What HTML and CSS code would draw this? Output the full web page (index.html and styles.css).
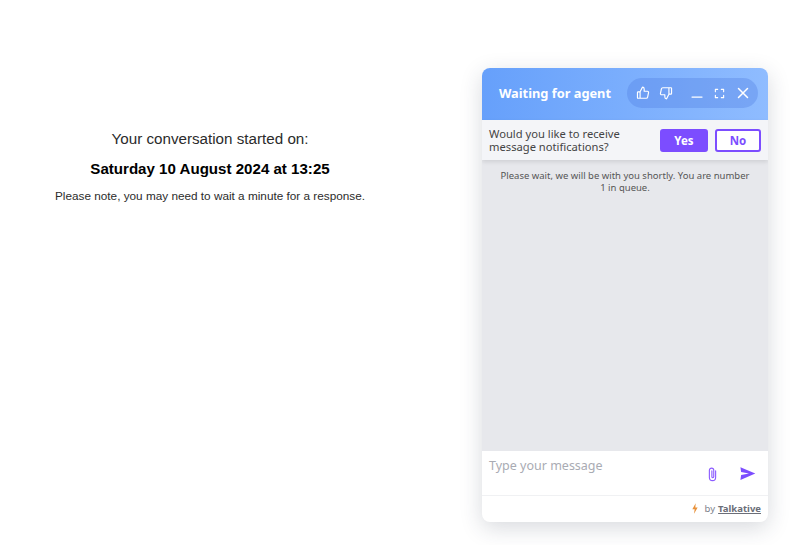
FILE: index.html
```html
<!DOCTYPE html>
<html lang="en">
<head>
<meta charset="utf-8">
<title>Chat</title>
<link rel="stylesheet" href="styles.css">
</head>
<body>
<main class="intro">
  <p class="started">Your conversation started on:</p>
  <p class="date">Saturday 10 August 2024 at 13:25</p>
  <p class="note">Please note, you may need to wait a minute for a response.</p>
</main>
<section class="widget">
  <header class="head">
    <h1 class="title">Waiting for agent</h1>
    <div class="tools">
      <svg class="ico" viewBox="0 0 24 24"><path d="M7 10v11H3.500a1 1 0 0 1-1-1v-9a1 1 0 0 1 1-1H7l4-8a3 3 0 0 1 3 3v4h5.500a2 2 0 0 1 2 2.400l-1.600 7.600a2.500 2.500 0 0 1-2.400 2H7"/></svg>
      <svg class="ico down" viewBox="0 0 24 24"><path d="M17 14V3h3.500a1 1 0 0 1 1 1v9a1 1 0 0 1-1 1H17l-4 8a3 3 0 0 1-3-3v-4H4.500a2 2 0 0 1-2-2.400l1.600-7.600a2.500 2.500 0 0 1 2.400-2H17"/></svg>
      <svg class="ico min" viewBox="0 0 24 24"><path d="M2 20h20"/></svg>
      <svg class="ico full" viewBox="0 0 24 24"><path d="M3 8V3h5M16 3h5v5M21 16v5h-5M8 21H3v-5"/></svg>
      <svg class="ico close" viewBox="0 0 24 24"><path d="M3 3l18 18M21 3L3 21"/></svg>
    </div>
  </header>
  <div class="notify">
    <p class="ask">Would you like to receive message notifications?</p>
    <button class="btn yes">Yes</button>
    <button class="btn no">No</button>
  </div>
  <div class="messages">
    <p class="wait">Please wait, we will be with you shortly. You are number 1 in queue.</p>
  </div>
  <div class="compose">
    <span class="placeholder">Type your message</span>
    <svg class="clip" viewBox="0 0 24 24"><path d="M17 7v10.500a5 5 0 0 1-10 0V6a3.500 3.500 0 0 1 7 0v10.500a1.500 1.500 0 0 1-3 0V7"/></svg>
    <svg class="send" viewBox="0 0 24 24"><path d="M2 3l21 9L2 21l1-7 11-2L3 10z"/></svg>
  </div>
  <footer class="brand">
    <svg class="bolt" viewBox="0 0 12 16"><path d="M7 0L2 9h3.500L4.500 16 10 6.500H6.500z"/></svg>
    <span class="by">by</span>
    <a class="link" href="#">Talkative</a>
  </footer>
</section>
</body>
</html>
```

FILE: styles.css
```css
* { box-sizing: border-box; }
html, body { height: 100%; }
body {
  margin: 0;
  background: #fff;
  display: flex;
  align-items: flex-start;
  overflow: hidden;
}
p, h1 { margin: 0; }
.intro {
  width: 420px;
  padding-top: 130px;
  text-align: center;
  font-family: "Liberation Sans", Arial, sans-serif;
  color: #2b2b2b;
}
.started { font-size: 15.200px; line-height: 18px; }
.date { font-size: 15.100px; font-weight: 700; line-height: 18px; margin-top: 12px; color: #000; }
.note { font-size: 11.770px; line-height: 14px; margin-top: 11px; }
.widget {
  width: 286px;
  height: 454px;
  margin: 68px 0 0 62px;
  border-radius: 8px;
  overflow: hidden;
  display: flex;
  flex-direction: column;
  background: #fff;
  box-shadow: 0 6px 22px rgba(40, 50, 70, .18);
  font-family: "Noto Sans", "Open Sans", sans-serif;
}
.head {
  height: 52px;
  flex: none;
  display: flex;
  align-items: center;
  justify-content: space-between;
  padding: 0 10px 2px 17px;
  background: linear-gradient(90deg, #66a0fb, #8fbcff);
}
.title { font-size: 12.800px; font-weight: 700; color: #fff; }
.tools {
  width: 131px;
  height: 30px;
  border-radius: 15px;
  background: rgba(80, 125, 225, .35);
  display: flex;
  align-items: center;
  padding-left: 9px;
}
.ico {
  width: 14px;
  height: 14px;
  fill: none;
  stroke: #fff;
  stroke-width: 2;
  stroke-linejoin: round;
  stroke-linecap: round;
  margin-right: 9px;
}
.min { width: 12px; height: 12px; margin-left: 9px; margin-right: 11px; stroke-width: 2.500; }
.full { width: 11px; height: 11px; margin-right: 12px; stroke-width: 2.500; }
.close { width: 12px; height: 12px; margin-right: 0; stroke-width: 3; }
.notify {
  height: 40px;
  flex: none;
  display: flex;
  align-items: center;
  padding: 0 7px;
  background: #f4f5f8;
  box-shadow: 0 2px 4px rgba(0, 0, 0, .1);
  z-index: 1;
}
.ask { width: 171px; font-size: 11.200px; line-height: 13px; color: #444; }
.btn {
  width: 46px;
  height: 23px;
  border-radius: 3px;
  border: 2px solid #7c4dff;
  font: 700 11.500px "Noto Sans", sans-serif;
  padding: 0;
}
.yes { background: #7c4dff; color: #fff; width: 48px; }
.no { background: #fff; color: #7c4dff; margin-left: 7px; }
.messages {
  flex: 1;
  background: #e7e8ec;
  padding: 10px 16px;
}
.wait { font-size: 9.500px; line-height: 12px; color: #555; text-align: center; }
.compose {
  height: 45px;
  flex: none;
  display: flex;
  align-items: flex-start;
  padding: 7px 12px 0 7px;
  border-bottom: 1px solid #f0f1f3;
}
.placeholder { font-size: 12.500px; line-height: 16px; color: #a9abb3; flex: 1; }
.clip {
  width: 15px;
  height: 20px;
  margin: 6px 19px 0 0;
  fill: none;
  stroke: #8c5cff;
  stroke-width: 1.800;
  stroke-linecap: round;
}
.send { width: 17px; height: 17px; margin-top: 7px; fill: #7c4dff; }
.brand {
  height: 26px;
  flex: none;
  display: flex;
  align-items: center;
  justify-content: flex-end;
  padding: 0 7px 1px 0;
  font-size: 9.500px;
  color: #80828c;
}
.bolt { width: 8px; height: 11px; fill: #e8913a; margin-right: 6px; }
.by { margin-right: 3px; }
.link { color: #6b6e78; font-weight: 700; }
```
